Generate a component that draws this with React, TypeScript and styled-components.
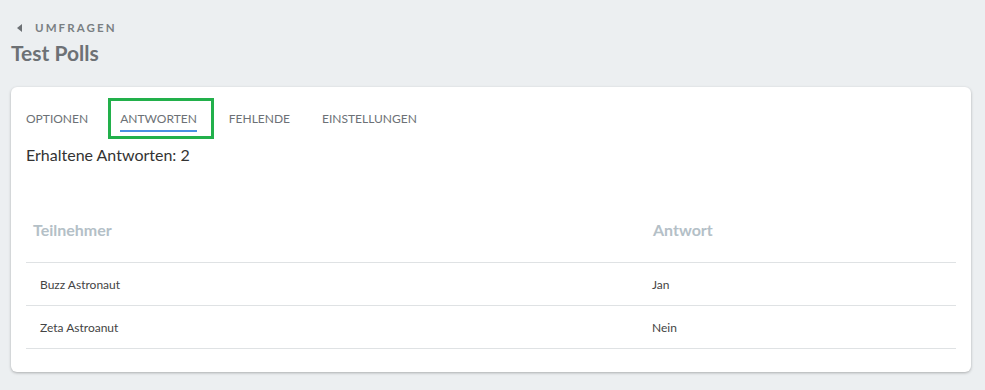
import React from "react";
import styled, { createGlobalStyle } from "styled-components";

const GlobalStyle = createGlobalStyle`
  html, body {
    margin: 0;
    padding: 0;
    background: #eceff1;
    font-family: Lato, "Open Sans", sans-serif;
  }
`;

const Page = styled.div`
  padding: 21px 14px 19px 11px;
`;

const BackLink = styled.a`
  display: flex;
  align-items: center;
  gap: 13px;
  padding-left: 6px;
  font-size: 11.5px;
  font-weight: 700;
  letter-spacing: 2.1px;
  color: #7a7f83;
  text-decoration: none;
`;

const Title = styled.h1`
  margin: 6px 0 0;
  font-size: 21px;
  font-weight: 700;
  color: #6d7175;
`;

const Card = styled.div`
  margin-top: 22px;
  background: #fff;
  border-radius: 6px;
  box-shadow: 0 1px 3px rgba(0, 0, 0, 0.28);
  padding: 0 15px 23px;
`;

const Tabs = styled.div`
  display: flex;
  gap: 32px;
  padding-top: 24px;
`;

const Tab = styled.div<{ active?: boolean; highlight?: boolean }>`
  position: relative;
  font-size: 12px;
  color: #6c7176;
  padding-bottom: 4px;
  border-bottom: 2px solid ${(p) => (p.active ? "#4a90e2" : "transparent")};

  ${(p) =>
    p.highlight &&
    `
    &::after {
      content: "";
      position: absolute;
      left: -12px;
      right: -17px;
      top: -13px;
      bottom: -9px;
      border: 3px solid #22b04b;
    }
  `}
`;

const Summary = styled.div`
  margin-top: 13px;
  font-size: 16px;
  color: #333;
`;

const Table = styled.div`
  margin-top: 36px;
  display: grid;
  grid-template-columns: 612px 1fr;
`;

const HeadCell = styled.div<{ inset?: number }>`
  height: 59px;
  padding-bottom: 3px;
  display: flex;
  align-items: center;
  padding-left: ${(p) => p.inset ?? 14}px;
  font-size: 16px;
  font-weight: 700;
  color: #b4c0c7;
  border-bottom: 1px solid #dfe2e4;
`;

const Cell = styled.div`
  height: 42px;
  display: flex;
  align-items: center;
  padding-left: 14px;
  font-size: 12px;
  color: #444;
  border-bottom: 1px solid #dfe2e4;
`;

const rows = [
  { name: "Buzz Astronaut", answer: "Jan" },
  { name: "Zeta Astroanut", answer: "Nein" },
];

const tabs = ["OPTIONEN", "ANTWORTEN", "FEHLENDE", "EINSTELLUNGEN"];

export default function App() {
  return (
    <>
      <GlobalStyle />
      <Page>
        <BackLink href="#">
          <svg width="5" height="8" viewBox="0 0 5 8">
            <path d="M5 0 L0 4 L5 8 Z" fill="#6d7175" />
          </svg>
          UMFRAGEN
        </BackLink>
        <Title>Test Polls</Title>
        <Card>
          <Tabs>
            {tabs.map((t) => (
              <Tab key={t} active={t === "ANTWORTEN"} highlight={t === "ANTWORTEN"}>
                {t}
              </Tab>
            ))}
          </Tabs>
          <Summary>Erhaltene Antworten: 2</Summary>
          <Table>
            <HeadCell inset={7}>Teilnehmer</HeadCell>
            <HeadCell inset={15}>Antwort</HeadCell>
            {rows.map((r) => (
              <React.Fragment key={r.name}>
                <Cell>{r.name}</Cell>
                <Cell>{r.answer}</Cell>
              </React.Fragment>
            ))}
          </Table>
        </Card>
      </Page>
    </>
  );
}
